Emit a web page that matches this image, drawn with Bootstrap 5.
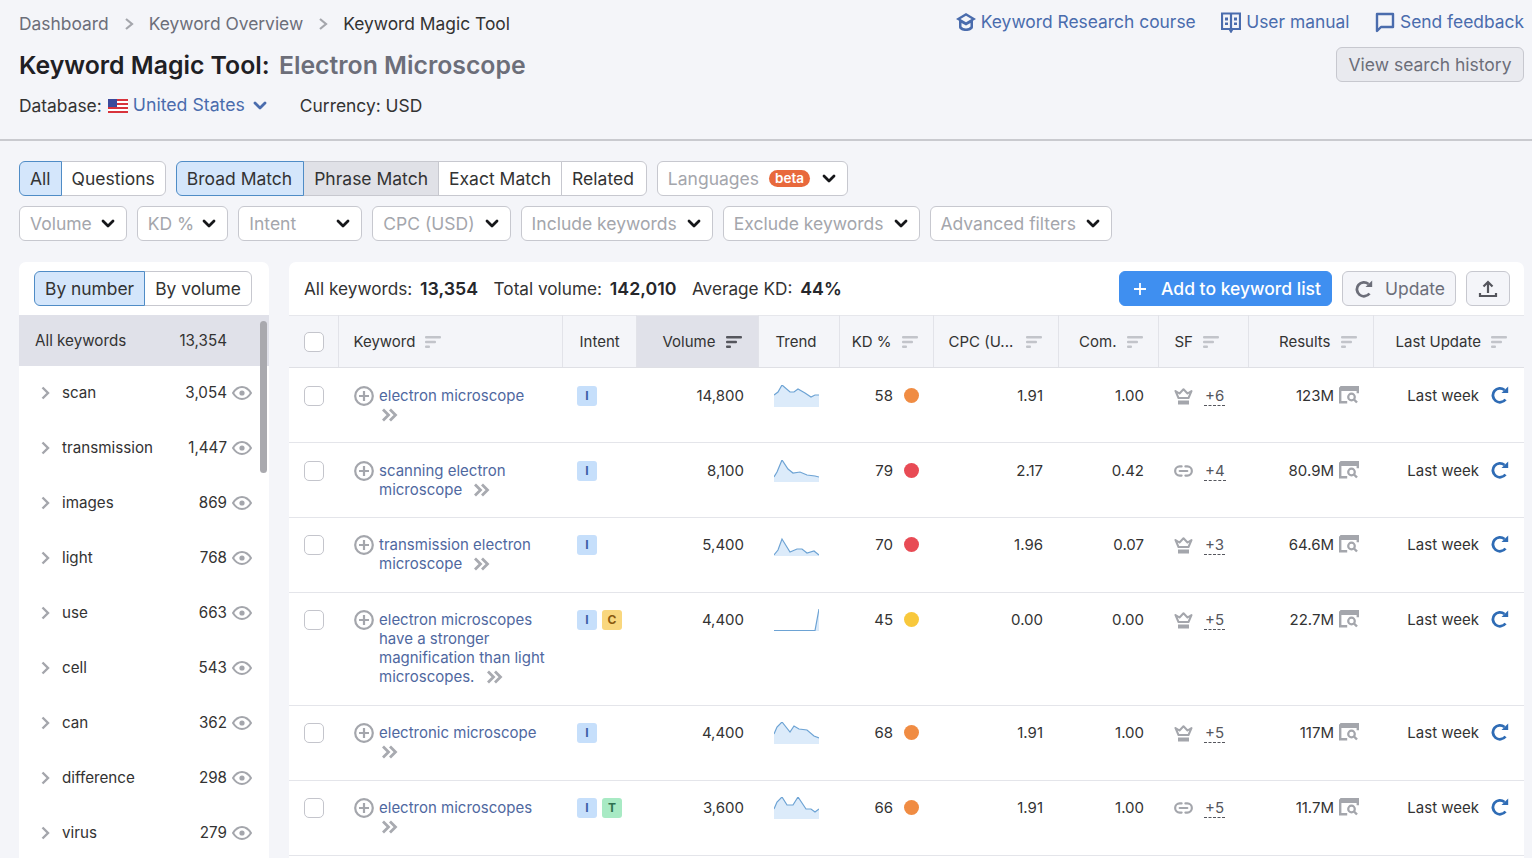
<!DOCTYPE html>
<html lang="en">
<head>
<meta charset="utf-8">
<title>Keyword Magic Tool</title>
<link rel="stylesheet" href="https://cdn.jsdelivr.net/npm/bootstrap@5.3.0/dist/css/bootstrap.min.css">
<style>
html,body{height:858px;overflow:hidden}
body{background:#f4f5f9;color:#333;font-family:Inter,"Liberation Sans",sans-serif;font-size:15px;line-height:19px}
svg{display:inline-block;flex:none}
.top-head{height:141px;border-bottom:2px solid #c9cacf;padding:11px 8px 0 19px;font-size:17.4px;line-height:26px}
.crumbs{color:#6c6e79;gap:14px}
.crumbs .cur{color:#333}
.crumb-sep{color:#a4a6ac}
.page-title{font-size:24.8px;line-height:34px;font-weight:600;margin:11px 0 0;color:#1f2024}
.page-title span{color:#6c6e79;margin-left:3px}
.db-line{margin-top:11px}
.db-flag{margin-left:6px;margin-right:5px}
.db-name{font-size:17.7px;position:relative;top:-1px}
.db-chev{margin-left:8px;margin-right:33px}
.lnk{color:#4a6cad;text-decoration:none}
.top-links{gap:25.5px;margin-top:-2px}
.top-links .lnk{gap:5px}
.hist-btn{background:#e9eaef;border:1px solid #c7c8cf;color:#6c6e79;font-size:17.5px;line-height:33px;height:35px;padding:0 11.5px;border-radius:6px;margin-top:12px}
.filters{padding:20px 8px 0 19px}
.frow{gap:10px;height:35px}
.frow+.frow{margin-top:10px}
.tg{background:#fff;border:1px solid #c7c8cf;color:#333;font-size:17.5px;line-height:33px;height:35px;padding:0 10px;border-radius:6px;white-space:nowrap}
.tg:hover{background:#fff;border-color:#c7c8cf;color:#333}
.tg-on,.tg-on:hover{background:#d4e6fb;border-color:#4f8cc6;color:#333;z-index:1}
.tg-gray,.tg-gray:hover{background:#e0e1e7}
.tg-b{padding-right:11px}
.tg-r{padding-right:12px}
.sel{color:#a4a6ac;display:flex;align-items:center;justify-content:space-between;padding:0 11px 0 10px;gap:10px}
.sel:hover{color:#a4a6ac}
.sel svg{color:#16171a}
.sel.g9{gap:9px}
.sel.g8{gap:8px}
.w-int{width:124px}
.w-lang{width:191px}
.beta{background:#e8693c;color:#fff;font-size:13.5px;font-weight:600;line-height:16px;height:17px;padding:0 6px;border-radius:8.500px;margin-left:10px;position:relative;top:-2px;display:inline-block}
.main-area{padding:21px 8px 0 19px;gap:20px}
.side-panel{width:250px;flex:none;background:#fff;border-radius:7px 7px 0 0;position:relative;height:600px;font-size:15.2px}
.side-top{padding:9px 17px 9px 15px}
.side-top .tg{font-size:17.4px}
.all-row{background:#e0e1e9;height:51px;padding:0 42px 1px 16px;margin-bottom:-1px}
.side-row{height:55px;padding:0 17px 0 22px}
.side-row .chev{color:#a4a6ac;margin-right:12px}
.side-row .num{margin-left:auto;margin-right:5px}
.side-row .eye{color:#a4a6ac}
.scroll-thumb{position:absolute;left:241px;top:59px;width:7px;height:152px;background:#a9a9ae;border-radius:4px}
.tbl-panel{flex:1 1 0;min-width:0;background:#fff;border-radius:7px 7px 0 0;height:600px}
.tbl-top{height:53px;padding:0 14px 0 15px;font-size:17.2px}
.tbl-top b{font-weight:600;color:#26272b;font-size:17.8px;margin-left:3px}
.tbl-top .stat{margin-right:15.500px}
.tbl-btns{gap:10px;margin-left:auto}
.add-btn,.add-btn:hover{background:#3f8ff0;border:1px solid #3f8ff0;color:#fff;font-size:17.5px;font-weight:500;line-height:33px;height:35px;padding:0 10px 0 13px;border-radius:6px;gap:14px}
.gray-btn,.gray-btn:hover{background:#f4f5f9;border:1px solid #c7c8cf;color:#6c6e79;font-size:17.5px;line-height:33px;height:35px;padding:0 10px 0 12px;border-radius:6px;gap:12px}
.gray-btn.sq,.gray-btn.sq:hover{padding:0 11px}
.kw-table{table-layout:fixed;width:1235px;margin:0;border-collapse:collapse;color:#333;font-size:15px;line-height:19px}
.kw-table th{background:#f4f5f9;font-weight:400;height:52px;padding:0 15px;border:0;border-top:1px solid #e6e7ec;border-bottom:1px solid #dfe0e5;border-right:1px solid #e2e3e9;vertical-align:middle;color:#333;white-space:nowrap}
.kw-table th:last-child{border-right:0}
.kw-table th.sorted{background:#e0e1e9}
.kw-table td{padding:18px 14px 18px 15px;border:0;border-bottom:1px solid #e4e5ea;vertical-align:top;background:#fff;color:#333}
.kw-table tbody tr:nth-child(n+3) td{padding-top:17px;padding-bottom:19px}
.kw-table .ra{text-align:right}
.kw-table th.th-r{padding-right:16px}
.kw-table th.th-r2{padding-right:17px}
.kw-table th.th-l{padding-left:17px}
.kw-table th.th-sf{padding-left:16px}
.kw-table td.kw-td{padding-left:16px;padding-right:0}
.kw-table td.sp-td{padding-left:16px}
.kw-table td.in-td{padding-right:0}
.kw-table td.cpc-td,.kw-table td.lw-td{padding-right:15px}
.th-in{display:flex;align-items:center;gap:10px}
.th-in.end{justify-content:flex-end}
.sort-i{color:#c2c4ca}
.sorted .sort-i{color:#55565d}
.form-check-input.chk{width:20px;height:20px;margin:0;border:1px solid #c4c5cc;border-radius:5px;display:block}
.kw-cell{display:flex;gap:5px}
.kw-cell .pl{color:#a4a6ac}
.kw-text{width:170px;color:#4f689f}
.dbl{color:#a8aab0;vertical-align:-2px;margin-left:7px}
.dbl.first{margin-left:2px}
.tag-wrap{display:flex;gap:5px}
.tagi{display:block;width:20px;height:20px;line-height:20px;text-align:center;border-radius:3px;font-size:12px;font-weight:700}
.tg-i{background:#c6dffb;color:#3d5ea6}
.tg-c{background:#f9d77e;color:#8a5a10}
.tg-t{background:#a8eac4;color:#2f7050}
.spark{display:block;margin:-1px 0 0 0;color:#6da3d4}
.dotk{display:inline-block;width:15px;height:15px;border-radius:50%;margin-left:11px;vertical-align:-2px}
.d-or{background:#f08c43}
.d-re{background:#e84b55}
.d-ye{background:#f8c83c}
.sf-cell{display:flex;align-items:flex-start;gap:11px;color:#a4a6ac;padding-left:1px}
.sf-cell .cr{margin-top:2px}
.sf-cell .li{margin-top:4px}
.sf-plus{color:#55565d;border-bottom:1px dashed #55565d;line-height:19px;padding:0 1px;height:20px}
.res-i{color:#a4a6ac;margin-left:5px;vertical-align:-3px}
.ref-i{color:#2f6cb5;margin-left:12px;vertical-align:-3px}
</style>
</head>
<body>
<svg width="0" height="0" class="position-absolute" aria-hidden="true">
<defs>
<symbol id="i-gt" viewBox="0 0 12 14"><path d="M3 2l6 5-6 5" fill="none" stroke="currentColor" stroke-width="2.200"/></symbol>
<symbol id="i-gt2" viewBox="0 0 9 14"><path d="M1.500 1.500l5.500 5.500-5.500 5.500" fill="none" stroke="currentColor" stroke-width="2.400"/></symbol>
<symbol id="i-dn" viewBox="0 0 14 10"><path d="M2 2l5 5 5-5" fill="none" stroke="currentColor" stroke-width="2.800" stroke-linecap="round" stroke-linejoin="round"/></symbol>
<symbol id="i-cap" viewBox="0 0 20 20"><path d="M10 1L0 7l3 1.800V15c0 2.500 3.500 4 7 4s7-1.500 7-4V8.800L20 7z" fill="currentColor"/><path d="M10 3.800L4.500 7l5.500 3.200L15.500 7z" fill="#f4f5f9"/><path d="M5.500 11l4.500 2.500 4.500-2.500v3.500c-.8 1.300-2.700 2-4.500 2s-3.700-.7-4.500-2z" fill="#f4f5f9"/></symbol>
<symbol id="i-book" viewBox="0 0 20 21"><path d="M1 1.500h18v15.500h-7.500L10 19.500 8.500 17H1z" fill="none" stroke="currentColor" stroke-width="2.200"/><path d="M10 2v15" stroke="currentColor" stroke-width="2.200"/><path d="M4 5.500h3v3H4zM13 5.500h3v3h-3zM4 10.500h3v2.500H4zM13 10.500h3v2.500h-3z" fill="currentColor"/></symbol>
<symbol id="i-msg" viewBox="0 0 20 21"><path d="M2 2h16v13H6l-4 4z" fill="none" stroke="currentColor" stroke-width="2.400" stroke-linejoin="round"/></symbol>
<symbol id="i-eye" viewBox="0 0 20 14"><path d="M1 7c2.500-4 5.500-6 9-6s6.500 2 9 6c-2.500 4-5.500 6-9 6S3.500 11 1 7z" fill="none" stroke="currentColor" stroke-width="2"/><circle cx="10" cy="7" r="2.600" fill="currentColor"/></symbol>
<symbol id="i-sort" viewBox="0 0 16 12"><rect x="0" y="0" width="16" height="2.400" rx="1" fill="currentColor"/><rect x="0" y="4.800" width="11" height="2.400" rx="1" fill="currentColor"/><rect x="0" y="9.600" width="5" height="2.400" rx="1" fill="currentColor"/></symbol>
<symbol id="i-add" viewBox="0 0 20 20"><circle cx="10" cy="10" r="8.800" fill="none" stroke="currentColor" stroke-width="2.200"/><path d="M10 5v10M5 10h10" stroke="currentColor" stroke-width="2.200"/></symbol>
<symbol id="i-dbl" viewBox="0 0 17 14"><path d="M2 1.500l5.500 5.500-5.500 5.500M9 1.500l5.500 5.500-5.500 5.500" fill="none" stroke="currentColor" stroke-width="2.800"/></symbol>
<symbol id="i-crown" viewBox="0 0 19 17"><path d="M1.500 3L5.500 5.500 9.500 1.200 13.500 5.500 17.500 3 14.500 10H4.500z" fill="none" stroke="currentColor" stroke-width="2" stroke-linejoin="round"/><rect x="4" y="12.500" width="11" height="4" fill="currentColor"/></symbol>
<symbol id="i-link" viewBox="0 0 20 12"><path d="M8 1.200H6a4.800 4.800 0 000 9.600h2M12 1.200h2a4.800 4.800 0 010 9.600h-2M6 6h8" fill="none" stroke="currentColor" stroke-width="2.300" stroke-linecap="round"/></symbol>
<symbol id="i-res" viewBox="0 0 20 18"><path d="M1.200 1.200h17.600v6M1.200 1.200v15h7" fill="none" stroke="currentColor" stroke-width="2.400"/><rect x="1" y="1" width="18" height="4" fill="currentColor"/><circle cx="12.500" cy="11" r="3.300" fill="none" stroke="currentColor" stroke-width="2.200"/><path d="M15 13.500l3 3" stroke="currentColor" stroke-width="2.400"/></symbol>
<symbol id="i-ref" viewBox="0 0 18 18"><path d="M14.500 13.500A7 7 0 1 1 13.500 4" fill="none" stroke="currentColor" stroke-width="2.800"/><path d="M10.500 7h6.700V.5z" fill="currentColor"/></symbol>
</defs>
</svg>

<header class="top-head d-flex justify-content-between">
  <div>
    <div class="crumbs d-flex align-items-center">
      <span>Dashboard</span><svg class="crumb-sep" width="12" height="14"><use href="#i-gt"/></svg>
      <span>Keyword Overview</span><svg class="crumb-sep" width="12" height="14"><use href="#i-gt"/></svg>
      <span class="cur">Keyword Magic Tool</span>
    </div>
    <h1 class="page-title">Keyword Magic Tool: <span>Electron Microscope</span></h1>
    <div class="db-line d-flex align-items-center">
      <span>Database:</span>
      <svg class="db-flag" width="20" height="14" viewBox="0 0 20 14"><rect width="20" height="14" fill="#fff"/><path d="M0 0h20v2H0zM0 4h20v2H0zM0 8h20v2H0zM0 12h20v2H0z" fill="#d8333c"/><rect width="9" height="8" fill="#3b4a9c"/></svg>
      <a class="lnk db-name" href="#">United States</a>
      <svg class="lnk db-chev" width="14" height="10"><use href="#i-dn"/></svg>
      <span>Currency: USD</span>
    </div>
  </div>
  <div class="d-flex flex-column align-items-end">
    <div class="top-links d-flex align-items-center">
      <a class="lnk d-flex align-items-center" href="#"><svg width="20" height="20"><use href="#i-cap"/></svg>Keyword Research course</a>
      <a class="lnk d-flex align-items-center" href="#"><svg width="20" height="21"><use href="#i-book"/></svg>User manual</a>
      <a class="lnk d-flex align-items-center" href="#"><svg width="20" height="21"><use href="#i-msg"/></svg>Send feedback</a>
    </div>
    <button type="button" class="btn hist-btn">View search history</button>
  </div>
</header>

<section class="filters">
  <div class="frow d-flex">
    <div class="btn-group">
      <button type="button" class="btn tg tg-on">All</button>
      <button type="button" class="btn tg">Questions</button>
    </div>
    <div class="btn-group">
      <button type="button" class="btn tg tg-on tg-b">Broad Match</button>
      <button type="button" class="btn tg tg-gray">Phrase Match</button>
      <button type="button" class="btn tg">Exact Match</button>
      <button type="button" class="btn tg tg-r">Related</button>
    </div>
    <button type="button" class="btn tg sel w-lang"><span>Languages<span class="beta">beta</span></span><svg width="14" height="10"><use href="#i-dn"/></svg></button>
  </div>
  <div class="frow d-flex">
    <button type="button" class="btn tg sel g9">Volume<svg width="14" height="10"><use href="#i-dn"/></svg></button>
    <button type="button" class="btn tg sel g8">KD %<svg width="14" height="10"><use href="#i-dn"/></svg></button>
    <button type="button" class="btn tg sel w-int">Intent<svg width="14" height="10"><use href="#i-dn"/></svg></button>
    <button type="button" class="btn tg sel">CPC (USD)<svg width="14" height="10"><use href="#i-dn"/></svg></button>
    <button type="button" class="btn tg sel">Include keywords<svg width="14" height="10"><use href="#i-dn"/></svg></button>
    <button type="button" class="btn tg sel">Exclude keywords<svg width="14" height="10"><use href="#i-dn"/></svg></button>
    <button type="button" class="btn tg sel">Advanced filters<svg width="14" height="10"><use href="#i-dn"/></svg></button>
  </div>
</section>

<main class="main-area d-flex">
  <aside class="side-panel">
    <div class="side-top">
      <div class="btn-group">
        <button type="button" class="btn tg tg-on">By number</button>
        <button type="button" class="btn tg">By volume</button>
      </div>
    </div>
    <div class="all-row d-flex align-items-center justify-content-between"><span>All keywords</span><span>13,354</span></div>
    <div class="side-row d-flex align-items-center"><svg class="chev" width="9" height="14"><use href="#i-gt2"/></svg><span>scan</span><span class="num">3,054</span><svg class="eye" width="20" height="14"><use href="#i-eye"/></svg></div>
    <div class="side-row d-flex align-items-center"><svg class="chev" width="9" height="14"><use href="#i-gt2"/></svg><span>transmission</span><span class="num">1,447</span><svg class="eye" width="20" height="14"><use href="#i-eye"/></svg></div>
    <div class="side-row d-flex align-items-center"><svg class="chev" width="9" height="14"><use href="#i-gt2"/></svg><span>images</span><span class="num">869</span><svg class="eye" width="20" height="14"><use href="#i-eye"/></svg></div>
    <div class="side-row d-flex align-items-center"><svg class="chev" width="9" height="14"><use href="#i-gt2"/></svg><span>light</span><span class="num">768</span><svg class="eye" width="20" height="14"><use href="#i-eye"/></svg></div>
    <div class="side-row d-flex align-items-center"><svg class="chev" width="9" height="14"><use href="#i-gt2"/></svg><span>use</span><span class="num">663</span><svg class="eye" width="20" height="14"><use href="#i-eye"/></svg></div>
    <div class="side-row d-flex align-items-center"><svg class="chev" width="9" height="14"><use href="#i-gt2"/></svg><span>cell</span><span class="num">543</span><svg class="eye" width="20" height="14"><use href="#i-eye"/></svg></div>
    <div class="side-row d-flex align-items-center"><svg class="chev" width="9" height="14"><use href="#i-gt2"/></svg><span>can</span><span class="num">362</span><svg class="eye" width="20" height="14"><use href="#i-eye"/></svg></div>
    <div class="side-row d-flex align-items-center"><svg class="chev" width="9" height="14"><use href="#i-gt2"/></svg><span>difference</span><span class="num">298</span><svg class="eye" width="20" height="14"><use href="#i-eye"/></svg></div>
    <div class="side-row d-flex align-items-center"><svg class="chev" width="9" height="14"><use href="#i-gt2"/></svg><span>virus</span><span class="num">279</span><svg class="eye" width="20" height="14"><use href="#i-eye"/></svg></div>
    <div class="scroll-thumb"></div>
  </aside>

  <section class="tbl-panel">
    <div class="tbl-top d-flex align-items-center">
      <span class="stat">All keywords: <b>13,354</b></span>
      <span class="stat">Total volume: <b>142,010</b></span>
      <span class="stat">Average KD: <b>44%</b></span>
      <div class="tbl-btns d-flex">
        <button type="button" class="btn add-btn d-flex align-items-center"><svg width="14" height="14" viewBox="0 0 14 14"><path d="M7 1v12M1 7h12" stroke="currentColor" stroke-width="1.800"/></svg>Add to keyword list</button>
        <button type="button" class="btn gray-btn d-flex align-items-center"><svg width="18" height="18"><use href="#i-ref"/></svg>Update</button>
        <button type="button" class="btn gray-btn sq d-flex align-items-center" aria-label="Export"><svg width="20" height="18" viewBox="0 0 20 18"><path d="M10 13V2M5.500 6.500L10 2l4.500 4.500M2 13v3h16v-3" fill="none" stroke="#55565d" stroke-width="2.200"/></svg></button>
      </div>
    </div>
    <table class="table kw-table">
      <colgroup><col style="width:49px"><col style="width:224px"><col style="width:74px"><col style="width:122px"><col style="width:81px"><col style="width:94px"><col style="width:125px"><col style="width:100px"><col style="width:90px"><col style="width:125px"><col style="width:151px"></colgroup>
      <thead><tr>
        <th><input class="form-check-input chk" type="checkbox" aria-label="all"></th>
        <th><div class="th-in">Keyword<svg class="sort-i" width="16" height="12"><use href="#i-sort"/></svg></div></th>
        <th class="th-l">Intent</th>
        <th class="sorted th-r"><div class="th-in end">Volume<svg class="sort-i" width="16" height="12"><use href="#i-sort"/></svg></div></th>
        <th class="th-l">Trend</th>
        <th><div class="th-in end">KD %<svg class="sort-i" width="16" height="12"><use href="#i-sort"/></svg></div></th>
        <th class="th-r"><div class="th-in">CPC (U...<svg class="sort-i ms-auto" width="16" height="12"><use href="#i-sort"/></svg></div></th>
        <th><div class="th-in end">Com.<svg class="sort-i" width="16" height="12"><use href="#i-sort"/></svg></div></th>
        <th class="th-sf"><div class="th-in">SF<svg class="sort-i" width="16" height="12"><use href="#i-sort"/></svg></div></th>
        <th class="th-r"><div class="th-in end">Results<svg class="sort-i" width="16" height="12"><use href="#i-sort"/></svg></div></th>
        <th class="th-r2"><div class="th-in end">Last Update<svg class="sort-i" width="16" height="12"><use href="#i-sort"/></svg></div></th>
      </tr></thead>
      <tbody>
        <tr>
          <td><input class="form-check-input chk" type="checkbox" aria-label="row"></td>
          <td class="kw-td"><div class="kw-cell"><svg class="pl" width="20" height="20"><use href="#i-add"/></svg><div class="kw-text">electron microscope<br><svg class="dbl first" width="17" height="14"><use href="#i-dbl"/></svg></div></div></td>
          <td class="in-td"><div class="tag-wrap"><span class="tagi tg-i">I</span></div></td>
          <td class="ra">14,800</td>
          <td class="sp-td"><svg class="spark" width="45" height="22" viewBox="0 0 45 22"><polygon points="0,10 4,7 8,0 16,7 20,7 24,4 31,8 37,12 41,10 45,10 45,22 0,22" fill="#dcebfa"/><polyline points="0,10 4,7 8,0 16,7 20,7 24,4 31,8 37,12 41,10 45,10" fill="none" stroke="currentColor" stroke-width="1.200"/></svg></td>
          <td class="ra">58<span class="dotk d-or"></span></td>
          <td class="ra cpc-td">1.91</td>
          <td class="ra">1.00</td>
          <td><div class="sf-cell"><svg class="cr" width="19" height="17"><use href="#i-crown"/></svg><span class="sf-plus">+6</span></div></td>
          <td class="ra">123M<svg class="res-i" width="20" height="18"><use href="#i-res"/></svg></td>
          <td class="ra lw-td">Last week<svg class="ref-i" width="18" height="18"><use href="#i-ref"/></svg></td>
        </tr>
        <tr>
          <td><input class="form-check-input chk" type="checkbox" aria-label="row"></td>
          <td class="kw-td"><div class="kw-cell"><svg class="pl" width="20" height="20"><use href="#i-add"/></svg><div class="kw-text">scanning electron microscope <svg class="dbl" width="17" height="14"><use href="#i-dbl"/></svg></div></div></td>
          <td class="in-td"><div class="tag-wrap"><span class="tagi tg-i">I</span></div></td>
          <td class="ra">8,100</td>
          <td class="sp-td"><svg class="spark" width="45" height="22" viewBox="0 0 45 22"><polygon points="0,17 3,12 8,0 14,9 19,13 26,12 33,15 41,16 45,17 45,22 0,22" fill="#dcebfa"/><polyline points="0,17 3,12 8,0 14,9 19,13 26,12 33,15 41,16 45,17" fill="none" stroke="currentColor" stroke-width="1.200"/></svg></td>
          <td class="ra">79<span class="dotk d-re"></span></td>
          <td class="ra cpc-td">2.17</td>
          <td class="ra">0.42</td>
          <td><div class="sf-cell"><svg class="li" width="19" height="12"><use href="#i-link"/></svg><span class="sf-plus">+4</span></div></td>
          <td class="ra">80.9M<svg class="res-i" width="20" height="18"><use href="#i-res"/></svg></td>
          <td class="ra lw-td">Last week<svg class="ref-i" width="18" height="18"><use href="#i-ref"/></svg></td>
        </tr>
        <tr>
          <td><input class="form-check-input chk" type="checkbox" aria-label="row"></td>
          <td class="kw-td"><div class="kw-cell"><svg class="pl" width="20" height="20"><use href="#i-add"/></svg><div class="kw-text">transmission electron microscope <svg class="dbl" width="17" height="14"><use href="#i-dbl"/></svg></div></div></td>
          <td class="in-td"><div class="tag-wrap"><span class="tagi tg-i">I</span></div></td>
          <td class="ra">5,400</td>
          <td class="sp-td"><svg class="spark" width="45" height="22" viewBox="0 0 45 22"><polygon points="0,21 4,16 8,5 16,18 23,15 28,15 33,19 40,17 45,21 45,22 0,22" fill="#dcebfa"/><polyline points="0,21 4,16 8,5 16,18 23,15 28,15 33,19 40,17 45,21" fill="none" stroke="currentColor" stroke-width="1.200"/></svg></td>
          <td class="ra">70<span class="dotk d-re"></span></td>
          <td class="ra cpc-td">1.96</td>
          <td class="ra">0.07</td>
          <td><div class="sf-cell"><svg class="cr" width="19" height="17"><use href="#i-crown"/></svg><span class="sf-plus">+3</span></div></td>
          <td class="ra">64.6M<svg class="res-i" width="20" height="18"><use href="#i-res"/></svg></td>
          <td class="ra lw-td">Last week<svg class="ref-i" width="18" height="18"><use href="#i-ref"/></svg></td>
        </tr>
        <tr>
          <td><input class="form-check-input chk" type="checkbox" aria-label="row"></td>
          <td class="kw-td"><div class="kw-cell"><svg class="pl" width="20" height="20"><use href="#i-add"/></svg><div class="kw-text">electron microscopes have a stronger magnification than light microscopes. <svg class="dbl" width="17" height="14"><use href="#i-dbl"/></svg></div></div></td>
          <td class="in-td"><div class="tag-wrap"><span class="tagi tg-i">I</span><span class="tagi tg-c">C</span></div></td>
          <td class="ra">4,400</td>
          <td class="sp-td"><svg class="spark" width="45" height="22" viewBox="0 0 45 22"><polygon points="0,21.500 41,21.500 45,0 45,22 0,22" fill="#dcebfa"/><polyline points="0,21.500 41,21.500 45,0" fill="none" stroke="currentColor" stroke-width="1.200"/></svg></td>
          <td class="ra">45<span class="dotk d-ye"></span></td>
          <td class="ra cpc-td">0.00</td>
          <td class="ra">0.00</td>
          <td><div class="sf-cell"><svg class="cr" width="19" height="17"><use href="#i-crown"/></svg><span class="sf-plus">+5</span></div></td>
          <td class="ra">22.7M<svg class="res-i" width="20" height="18"><use href="#i-res"/></svg></td>
          <td class="ra lw-td">Last week<svg class="ref-i" width="18" height="18"><use href="#i-ref"/></svg></td>
        </tr>
        <tr>
          <td><input class="form-check-input chk" type="checkbox" aria-label="row"></td>
          <td class="kw-td"><div class="kw-cell"><svg class="pl" width="20" height="20"><use href="#i-add"/></svg><div class="kw-text">electronic microscope<br><svg class="dbl first" width="17" height="14"><use href="#i-dbl"/></svg></div></div></td>
          <td class="in-td"><div class="tag-wrap"><span class="tagi tg-i">I</span></div></td>
          <td class="ra">4,400</td>
          <td class="sp-td"><svg class="spark" width="45" height="22" viewBox="0 0 45 22"><polygon points="0,12 3,5 8,0 16,10 20,4 25,7 33,8 40,14 45,16 45,22 0,22" fill="#dcebfa"/><polyline points="0,12 3,5 8,0 16,10 20,4 25,7 33,8 40,14 45,16" fill="none" stroke="currentColor" stroke-width="1.200"/></svg></td>
          <td class="ra">68<span class="dotk d-or"></span></td>
          <td class="ra cpc-td">1.91</td>
          <td class="ra">1.00</td>
          <td><div class="sf-cell"><svg class="cr" width="19" height="17"><use href="#i-crown"/></svg><span class="sf-plus">+5</span></div></td>
          <td class="ra">117M<svg class="res-i" width="20" height="18"><use href="#i-res"/></svg></td>
          <td class="ra lw-td">Last week<svg class="ref-i" width="18" height="18"><use href="#i-ref"/></svg></td>
        </tr>
        <tr>
          <td><input class="form-check-input chk" type="checkbox" aria-label="row"></td>
          <td class="kw-td"><div class="kw-cell"><svg class="pl" width="20" height="20"><use href="#i-add"/></svg><div class="kw-text">electron microscopes<br><svg class="dbl first" width="17" height="14"><use href="#i-dbl"/></svg></div></div></td>
          <td class="in-td"><div class="tag-wrap"><span class="tagi tg-i">I</span><span class="tagi tg-t">T</span></div></td>
          <td class="ra">3,600</td>
          <td class="sp-td"><svg class="spark" width="45" height="22" viewBox="0 0 45 22"><polygon points="0,12 3,5 8,0 13,8 19,8 24,0 32,12 37,12 41,15 45,12 45,22 0,22" fill="#dcebfa"/><polyline points="0,12 3,5 8,0 13,8 19,8 24,0 32,12 37,12 41,15 45,12" fill="none" stroke="currentColor" stroke-width="1.200"/></svg></td>
          <td class="ra">66<span class="dotk d-or"></span></td>
          <td class="ra cpc-td">1.91</td>
          <td class="ra">1.00</td>
          <td><div class="sf-cell"><svg class="li" width="19" height="12"><use href="#i-link"/></svg><span class="sf-plus">+5</span></div></td>
          <td class="ra">11.7M<svg class="res-i" width="20" height="18"><use href="#i-res"/></svg></td>
          <td class="ra lw-td">Last week<svg class="ref-i" width="18" height="18"><use href="#i-ref"/></svg></td>
        </tr>
      </tbody>
    </table>
  </section>
</main>
<script src="https://cdn.jsdelivr.net/npm/bootstrap@5.3.0/dist/js/bootstrap.bundle.min.js"></script>
</body>
</html>
